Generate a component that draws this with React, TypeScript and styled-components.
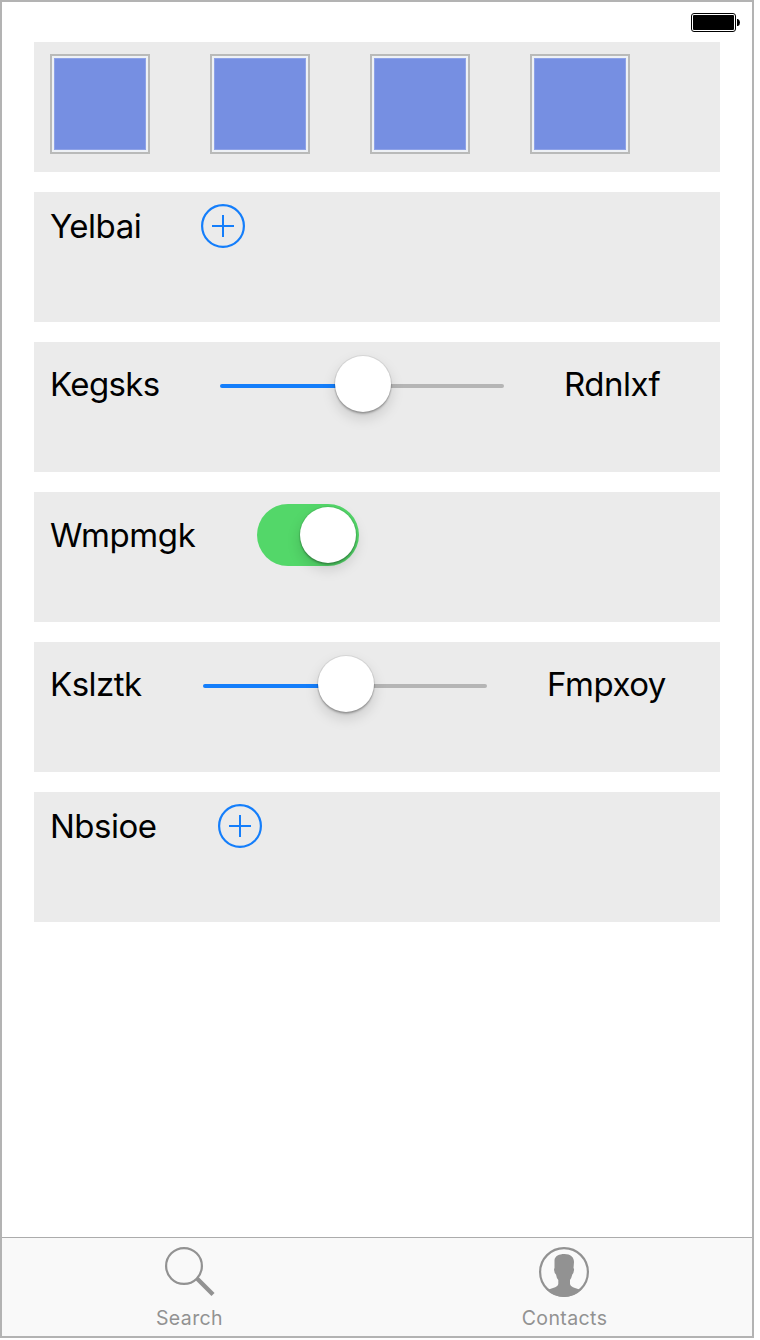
import React from "react";
import styled, { createGlobalStyle } from "styled-components";

const GlobalStyle = createGlobalStyle`
  *, *::before, *::after { box-sizing: border-box; }
  body { margin: 0; background: #fff; font-family: Inter, "Liberation Sans", sans-serif; }
`;

const Screen = styled.div`
  width: 754px;
  height: 1338px;
  border: 2px solid #b3b3b3;
  background: #fff;
  display: flex;
  flex-direction: column;
`;

const StatusBar = styled.header`
  height: 40px;
  flex: none;
  display: flex;
  justify-content: flex-end;
  padding: 11px 12px 0 0;
`;

const Content = styled.main`
  flex: 1;
  display: flex;
  flex-direction: column;
  gap: 20px;
  padding: 0 32px;
`;

const Panel = styled.section`
  height: 130px;
  padding: 12px 16px;
  background: #ebebeb;
`;

const Line = styled.div`
  display: flex;
  align-items: center;
  gap: 60px;
`;

const Thumb = styled.div`
  width: 100px;
  height: 100px;
  padding: 2px;
  border: 2px solid #b9bab9;
  background: #eef1f5;
  display: flex;

  &::after {
    content: "";
    flex: 1;
    border: 1px solid #8ea2e7;
    background: #768fe2;
  }
`;

const Label = styled.span<{ $width: number; $tracking?: number }>`
  flex: none;
  width: ${({ $width }) => $width}px;
  font-size: 33px;
  line-height: 40px;
  letter-spacing: ${({ $tracking = -0.5 }) => $tracking}px;
  white-space: nowrap;
  color: #000;
`;

const IconButton = styled.button`
  width: 44px;
  height: 44px;
  padding: 0;
  border: 0;
  background: none;
  color: #147efb;

  svg { display: block; }
`;

const Track = styled.div`
  flex: none;
  width: 284px;
  height: 60px;
  display: flex;
  align-items: center;

  &::before, &::after {
    content: "";
    height: 4px;
    margin-top: 4px;
    flex: none;
  }
  &::before {
    width: 143px;
    margin-right: -28px;
    background: #147efb;
    border-radius: 2px 0 0 2px;
  }
  &::after {
    width: 113px;
    background: #b5b5b5;
    border-radius: 0 2px 2px 0;
  }
`;

const Knob = styled.span`
  flex: none;
  z-index: 1;
  width: 56px;
  height: 56px;
  border-radius: 50%;
  background: #fff;
  box-shadow: 0 0 0 1px rgba(0, 0, 0, 0.07), 0 2px 2px rgba(0, 0, 0, 0.24), 0 6px 14px rgba(0, 0, 0, 0.15);
`;

const Switch = styled.div`
  width: 102px;
  height: 62px;
  padding: 3px;
  border-radius: 31px;
  display: flex;
  justify-content: flex-end;
  background: #53d769;
`;

const TabBar = styled.nav`
  flex: none;
  height: 99px;
  border-top: 1px solid #acacac;
  background: #f9f9f9;
  display: grid;
  grid-template-columns: 1fr 1fr;
`;

const Tab = styled.a<{ $nudge?: number }>`
  display: flex;
  flex-direction: column;
  align-items: center;
  padding-top: 9px;
  color: #929292;
  font-size: 19.5px;
  line-height: 24px;
  letter-spacing: 0.4px;

  svg {
    display: block;
    margin-bottom: 9px;
    margin-right: ${({ $nudge = 0 }) => $nudge}px;
  }
`;

const Battery = () => (
  <svg width="49" height="19" viewBox="0 0 49 19">
    <rect x="0.5" y="0.5" width="44" height="18" rx="2.5" fill="#fff" stroke="#000" />
    <rect x="2" y="2" width="41" height="15" rx="1" />
    <path d="M46 6h1q2 1 2 3.5T47 13h-1z" />
  </svg>
);

const AddButton = () => (
  <IconButton aria-label="Add">
    <svg width="44" height="44" viewBox="0 0 44 44" fill="none" stroke="currentColor" strokeWidth="2">
      <circle cx="22" cy="22" r="20.9" strokeWidth="2.2" />
      <path d="M11 22h22M22 11v22" />
    </svg>
  </IconButton>
);

const Slider = () => (
  <Track>
    <Knob />
  </Track>
);

const SearchIcon = () => (
  <svg width="50" height="50" viewBox="0 0 50 50" fill="none" stroke="currentColor">
    <circle cx="19" cy="19" r="17.9" strokeWidth="2.2" />
    <path d="M32 31.500L48 47.500" strokeWidth="4.4" />
  </svg>
);

const ContactIcon = () => (
  <svg width="50" height="50" viewBox="0 0 50 50">
    <circle cx="25" cy="25" r="23.9" fill="none" stroke="currentColor" strokeWidth="2.2" />
    <path
      fill="currentColor"
      d="M15.5 13C16 9 20 7 25.5 7C31.5 7 35 10 35 15L34.5 21Q35.5 22 34.8 24Q34.5 27 33.3 27.5Q32.5 31 31 33V37Q31.500 39.500 36 41L42 43Q34 50 25 50Q16 50 8 43L14 41Q19 39.500 19.300 37V33Q17.500 31 17 27.500Q15.500 27 15.300 24Q14.700 22 15.500 21Z"
    />
  </svg>
);

export default function App() {
  return (
    <>
      <GlobalStyle />
      <Screen>
        <StatusBar>
          <Battery />
        </StatusBar>
        <Content>
          <Panel>
            <Line>
              <Thumb />
              <Thumb />
              <Thumb />
              <Thumb />
            </Line>
          </Panel>
          <Panel>
            <Line>
              <Label $width={91}>Yelbai</Label>
              <AddButton />
            </Line>
          </Panel>
          <Panel>
            <Line>
              <Label $width={110} $tracking={-0.6}>Kegsks</Label>
              <Slider />
              <Label $width={97}>Rdnlxf</Label>
            </Line>
          </Panel>
          <Panel>
            <Line>
              <Label $width={147} $tracking={-0.4}>Wmpmgk</Label>
              <Switch>
                <Knob />
              </Switch>
            </Line>
          </Panel>
          <Panel>
            <Line>
              <Label $width={93}>Kslztk</Label>
              <Slider />
              <Label $width={118}>Fmpxoy</Label>
            </Line>
          </Panel>
          <Panel>
            <Line>
              <Label $width={108}>Nbsioe</Label>
              <AddButton />
            </Line>
          </Panel>
        </Content>
        <TabBar>
          <Tab>
            <SearchIcon />
            Search
          </Tab>
          <Tab $nudge={2}>
            <ContactIcon />
            Contacts
          </Tab>
        </TabBar>
      </Screen>
    </>
  );
}
